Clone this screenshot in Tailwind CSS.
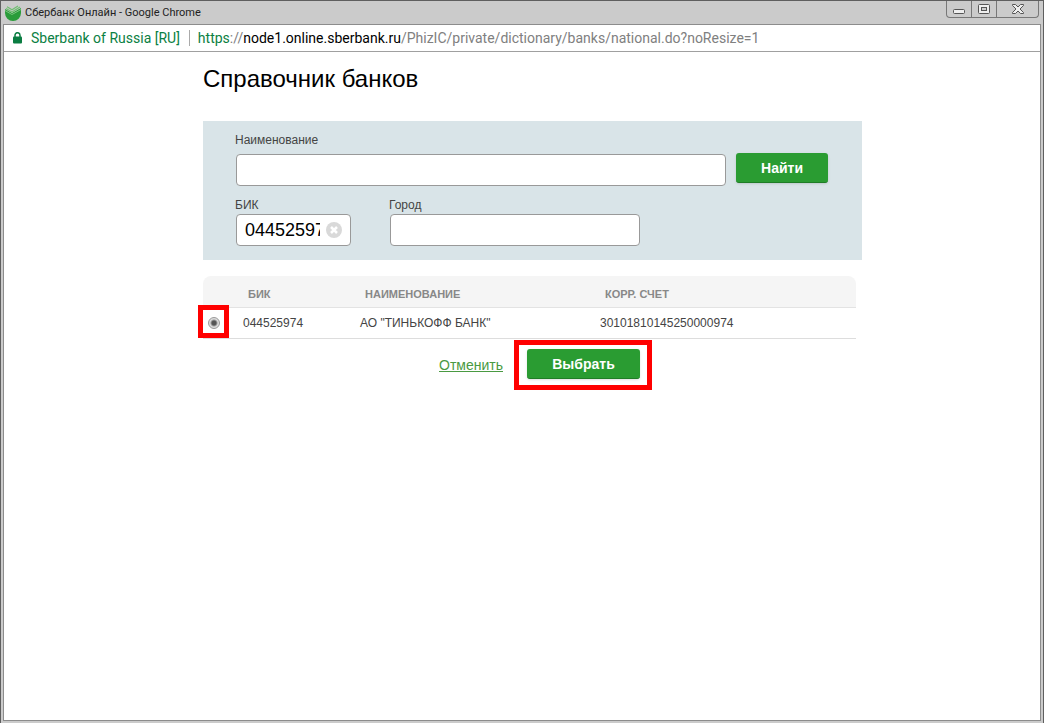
<!DOCTYPE html>
<html lang="ru">
<head>
<meta charset="UTF-8">
<meta name="viewport" content="width=device-width, initial-scale=1.0">
<title>Сбербанк Онлайн</title>
<script src="https://cdn.jsdelivr.net/npm/@tailwindcss/browser@4"></script>
</head>
<body class="bg-[#cbcbcb] text-[#444] font-['Liberation_Sans',Arial,sans-serif]">
<div class="min-h-screen flex flex-col border border-[#5f5f5f] border-b-0 px-[2px] pb-[2px]">
    <!-- Title bar -->
    <header class="h-[23px] flex items-center justify-between px-[2px] font-['Roboto',Tahoma,sans-serif]">
        <div class="flex items-center gap-1">
            <svg class="w-4 h-4" viewBox="0 0 16 16">
                <path d="M0 4 L7 8 L16 3 V8 A8 8 0 0 1 0 8 Z" fill="#2a9c3a"/>
                <path d="M1 3.500 L7 7 L15 2 M2 1.800 L7 4.800 L13 1" fill="none" stroke="#6fbf70" stroke-width="1.200"/>
                <path d="M0 5.500 L7 9.500 L16 4.500" fill="none" stroke="#8fcf8f" stroke-width="0.800"/>
            </svg>
            <span class="text-[11px] leading-4 text-[#222]">Сбербанк Онлайн - Google Chrome</span>
        </div>
        <div class="self-start flex h-[17px] border border-t-0 border-[#777] rounded-b divide-x divide-[#777]">
            <button class="w-[25px] flex items-center justify-center" aria-label="Свернуть">
                <svg class="w-3 h-4" viewBox="0 0 12 16"><rect x="0.500" y="8.500" width="11" height="4" rx="1" fill="#eee" stroke="#555"/></svg>
            </button>
            <button class="w-[25px] flex items-center justify-center" aria-label="Развернуть">
                <svg class="w-3 h-4" viewBox="0 0 12 16"><rect x="0.500" y="3.500" width="11" height="9" rx="1" fill="#eee" stroke="#555"/><rect x="3.500" y="6.500" width="5" height="3" fill="#ccc" stroke="#555"/></svg>
            </button>
            <button class="w-[41px] flex items-center justify-center" aria-label="Закрыть">
                <svg class="w-3 h-4" viewBox="0 0 12 16"><path d="M0.500 3.500 H3.500 L6 6 L8.500 3.500 H11.500 V4.500 L8 8 L11.500 11.500 V12.500 H8.500 L6 10 L3.500 12.500 H0.500 V11.500 L4 8 L0.500 4.500 Z" fill="#eee" stroke="#555"/></svg>
            </button>
        </div>
    </header>

    <div class="flex-1 flex flex-col bg-white border border-[#8c8c8c]">
        <!-- Address bar -->
        <div class="h-[27px] flex items-center pl-[9px] border-b border-[#a0a0a0] font-['Roboto',Tahoma,sans-serif] text-[14px] leading-5 text-[#808080] whitespace-nowrap">
            <svg class="w-[9px] h-3 mr-[9px]" viewBox="0 0 9 12">
                <rect y="4.500" width="9" height="7" rx="1" fill="#0b7d42"/>
                <path d="M2 5 V3.200 a2.500 2.500 0 0 1 5 0 V5" fill="none" stroke="#0b7d42" stroke-width="1.500"/>
            </svg>
            <span class="text-[#0b8043]">Sberbank of Russia [RU]</span>
            <span class="w-px h-4 bg-[#aaa] ml-[9px] mr-2"></span>
            <span><span class="text-[#0b8043]">https</span>://<span class="text-black">node1.online.sberbank.ru</span>/PhizIC/private/dictionary/banks/national.do?noResize=1</span>
        </div>

        <!-- Main content -->
        <main class="w-[680px] mx-auto pl-[21px] pt-3">
            <h1 class="text-2xl leading-[30px] text-black mb-[27px]">Справочник банков</h1>

            <form class="bg-[#d9e4e8] pl-8 pt-[9px] pb-[14px] text-xs">
                <label for="name" class="block leading-5 mb-1">Наименование</label>
                <div class="flex gap-[10px] pl-px">
                    <input type="text" id="name" class="w-[490px] h-8 px-2 text-lg text-black bg-white border border-[#999] rounded">
                    <button type="button" class="w-[92px] h-[30px] -mt-px pt-px bg-[#2a9c32] text-white text-sm font-bold rounded-[3px] border-b border-[#1f7d26] shadow">Найти</button>
                </div>
                <div class="flex gap-[38px] mt-[9px]">
                    <div>
                        <label for="bic" class="block leading-5 -mb-px">БИК</label>
                        <div class="w-[115px] h-8 ml-px pl-2 flex items-center bg-white border border-[#999] rounded">
                            <input type="text" id="bic" value="044525974" class="w-[75px] text-lg leading-6 text-black">
                            <button type="button" class="ml-[6px]" aria-label="Очистить">
                                <svg class="w-4 h-4" viewBox="0 0 16 16"><circle cx="8" cy="8" r="8" fill="#d9d9d9"/><path d="M5 5 L11 11 M11 5 L5 11" stroke="#fff" stroke-width="2.500"/></svg>
                            </button>
                        </div>
                    </div>
                    <div>
                        <label for="city" class="block leading-5 -mb-px">Город</label>
                        <input type="text" id="city" class="block w-[250px] h-8 ml-px px-2 text-lg text-black bg-white border border-[#999] rounded">
                    </div>
                </div>
            </form>

            <!-- Search results -->
            <div class="mt-4 mr-[6px]">
                <table class="w-full table-fixed border-separate border-spacing-0 text-left text-xs">
                    <thead>
                        <tr class="h-8 text-[11px] text-[#888]">
                            <th class="w-10 bg-[#f5f5f5] border-b border-[#e3e3e3] rounded-tl-lg"></th>
                            <th class="w-[117px] pl-[5px] pt-[6px] bg-[#f5f5f5] border-b border-[#e3e3e3]">БИК</th>
                            <th class="w-60 pl-[5px] pt-[6px] bg-[#f5f5f5] border-b border-[#e3e3e3]">НАИМЕНОВАНИЕ</th>
                            <th class="pl-[5px] pt-[6px] bg-[#f5f5f5] border-b border-[#e3e3e3] rounded-tr-lg">КОРР. СЧЕТ</th>
                        </tr>
                    </thead>
                    <tbody>
                        <tr class="h-[31px]">
                            <td class="relative border-b border-[#ddd]">
                                <input type="radio" id="bank" name="bank" checked aria-label="АО ТИНЬКОФФ БАНК" class="block ml-[5px] w-3 h-3 appearance-none rounded-full border border-[#999] bg-[radial-gradient(circle,#555_0_2px,#ddd_4px)]">
                                <span class="absolute -left-[5px] -top-[3px] w-[31px] h-[33px] border-[5px] border-[#f00] pointer-events-none"></span>
                            </td>
                            <td class="border-b border-[#ddd]"><label for="bank">044525974</label></td>
                            <td class="border-b border-[#ddd]">АО "ТИНЬКОФФ БАНК"</td>
                            <td class="border-b border-[#ddd]">30101810145250000974</td>
                        </tr>
                    </tbody>
                </table>
            </div>

            <div class="flex items-center justify-end gap-[11px] mt-px pr-[210px]">
                <a href="#" class="text-sm text-[#4a9a42] underline pb-px">Отменить</a>
                <div class="border-[5px] border-[#f00] px-[7px] pl-2 pt-1 pb-[6px]">
                    <button type="button" class="block w-[113px] h-[30px] pt-px bg-[#2a9c32] text-white text-sm font-bold rounded-[3px] border-b border-[#1f7d26] shadow">Выбрать</button>
                </div>
            </div>
        </main>
    </div>
</div>
</body>
</html>
